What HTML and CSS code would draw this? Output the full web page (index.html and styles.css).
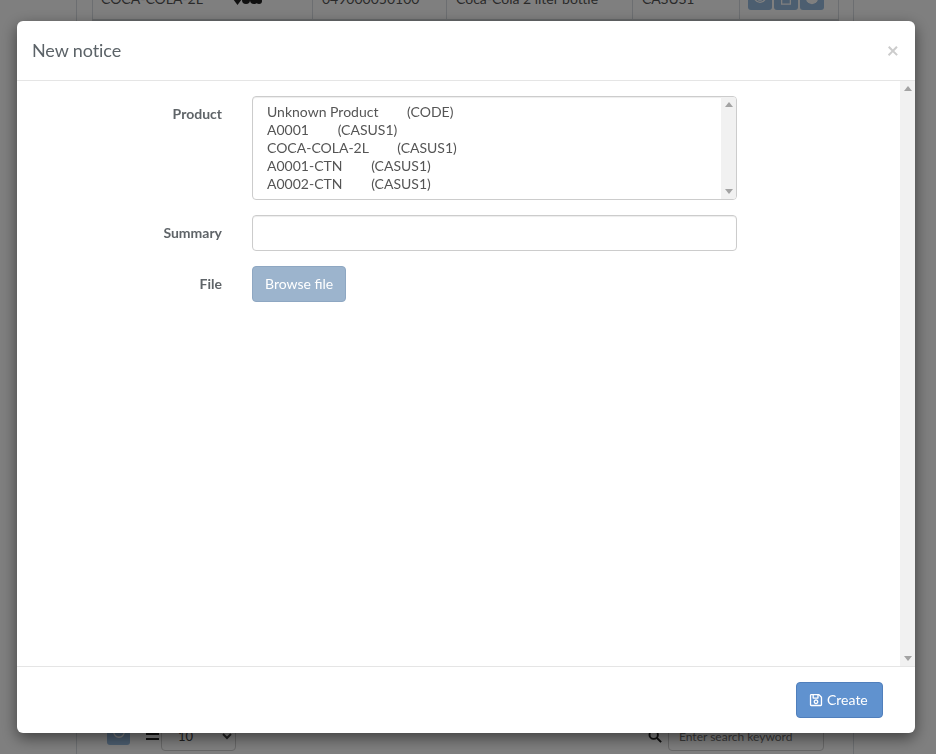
FILE: index.html
```html
<!DOCTYPE html>
<html lang="en">
<head>
<meta charset="utf-8">
<title>New notice</title>
<link rel="stylesheet" href="styles.css">
</head>
<body>
<div class="page">
  <div class="card">
    <table class="grid">
      <tr>
        <td class="c-code">COCA-COLA-2L</td>
        <td class="c-img">
          <svg class="shapes" viewBox="0 0 30 16" width="30" height="16"><path d="M4.5 5l4.5 5-4.5 6L0 10z"/><circle cx="13" cy="11" r="4"/><circle cx="21" cy="11" r="4"/><circle cx="17" cy="8" r="3.5"/><circle cx="26" cy="12" r="3"/></svg>
        </td>
        <td class="c-bar">049000050100</td>
        <td class="c-desc">Coca-Cola 2 liter bottle</td>
        <td class="c-own">CASUS1</td>
        <td class="c-act">
          <div class="acts">
            <span class="act"><svg viewBox="0 0 16 16" width="14" height="14"><path class="ln" d="M1 8s3-5 7-5 7 5 7 5-3 5-7 5-7-5-7-5z"/><circle class="ln" cx="8" cy="8" r="2.5"/></svg></span>
            <span class="act"><svg viewBox="0 0 16 16" width="14" height="14"><path class="ln" d="M3 1h10v14H3z"/></svg></span>
            <span class="act"><svg viewBox="0 0 16 16" width="14" height="14"><circle class="fl" cx="8" cy="8" r="7"/></svg></span>
          </div>
        </td>
      </tr>
    </table>
    <div class="tools">
      <span class="refresh"><svg viewBox="0 0 16 16" width="14" height="14"><path class="ln" d="M2 8a6 6 0 0 0 12 0"/></svg></span>
      <span class="bars"></span>
      <select class="pager"><option>10</option></select>
      <span class="spacer"></span>
      <svg class="lens" viewBox="0 0 16 16" width="14" height="14"><circle cx="6.5" cy="6.5" r="4.8"/><path d="M10 10l5 5"/></svg>
      <input class="search" type="text" placeholder="Enter search keyword">
    </div>
  </div>
</div>

<div class="overlay"></div>

<div class="modal">
  <div class="modal-head">
    <h4 class="modal-title">New notice</h4>
    <span class="close">×</span>
  </div>
  <div class="modal-middle">
    <div class="modal-body">
      <div class="row">
        <label class="lbl">Product</label>
        <div class="list-wrap">
          <select class="list" multiple size="5">
            <option>Unknown Product&nbsp;&nbsp;&nbsp;&nbsp;&nbsp;&nbsp;&nbsp;&nbsp;(CODE)</option>
            <option>A0001&nbsp;&nbsp;&nbsp;&nbsp;&nbsp;&nbsp;&nbsp;&nbsp;(CASUS1)</option>
            <option>COCA-COLA-2L&nbsp;&nbsp;&nbsp;&nbsp;&nbsp;&nbsp;&nbsp;&nbsp;(CASUS1)</option>
            <option>A0001-CTN&nbsp;&nbsp;&nbsp;&nbsp;&nbsp;&nbsp;&nbsp;&nbsp;(CASUS1)</option>
            <option>A0002-CTN&nbsp;&nbsp;&nbsp;&nbsp;&nbsp;&nbsp;&nbsp;&nbsp;(CASUS1)</option>
          </select>
          <div class="vbar vbar-list"><span class="arrow arrow-up"></span><span class="arrow arrow-down"></span></div>
        </div>
      </div>
      <div class="row row-mid">
        <label class="lbl">Summary</label>
        <input class="field" type="text">
      </div>
      <div class="row row-mid">
        <label class="lbl">File</label>
        <button class="btn btn-browse" type="button">Browse file</button>
      </div>
    </div>
    <div class="vbar"><span class="arrow arrow-up"></span><span class="arrow arrow-down"></span></div>
  </div>
  <div class="modal-foot">
    <button class="btn btn-create" type="button">
      <svg class="save" viewBox="0 0 448 512" width="14" height="14"><path d="M433.941 129.941l-83.882-83.882A48 48 0 0 0 316.118 32H48C21.49 32 0 53.49 0 80v352c0 26.51 21.49 48 48 48h352c26.51 0 48-21.49 48-48V163.882a48 48 0 0 0-14.059-33.941zM272 80v80H144V80h128zm122 352H54a6 6 0 0 1-6-6V86a6 6 0 0 1 6-6h42v104c0 13.255 10.745 24 24 24h176c13.255 0 24-10.745 24-24V83.882l78.243 78.243a6 6 0 0 1 1.757 4.243V426a6 6 0 0 1-6 6zM224 232c-48.523 0-88 39.477-88 88s39.477 88 88 88 88-39.477 88-88-39.477-88-88-88zm0 128c-22.056 0-40-17.944-40-40s17.944-40 40-40 40 17.944 40 40-17.944 40-40 40z"/></svg>
      Create
    </button>
  </div>
</div>
</body>
</html>
```

FILE: styles.css
```css
* { box-sizing: border-box; }
html, body { margin: 0; height: 100%; overflow: hidden; }
body {
  font-family: Lato, "Open Sans", sans-serif;
  font-size: 14px;
  color: #555;
  background: #fff;
}

/* Page behind the dialog */
.page { height: 754px; padding: 0 82px 0 76px; }
.card {
  height: 100%;
  border-left: 1px solid #d8dde2;
  border-right: 1px solid #d8dde2;
  padding: 0 15px;
  display: flex;
  flex-direction: column;
  justify-content: space-between;
  overflow: hidden;
}
.grid {
  border-collapse: collapse;
  table-layout: fixed;
  width: 746px;
  margin-top: -20px;
  color: #555;
}
.grid td {
  border: 1px solid #d8dde2;
  border-top: 0;
  border-bottom: 2px solid #d0d4d8;
  height: 40px;
  padding: 0 9px 10px;
  vertical-align: bottom;
  line-height: 20px;
  white-space: nowrap;
}
.grid td.c-code { width: 132px; padding-left: 8px; border-right: 0; }
.grid td.c-img { width: 88px; padding: 0 0 15px 8px; border-left: 0; }
.grid td.c-bar { width: 134px; }
.grid td.c-desc { width: 186px; }
.grid td.c-own { width: 107px; }
.grid td.c-act { width: 99px; padding: 0 8px 9px; }
.shapes { display: block; fill: #222; margin-bottom: -1px; }
.acts { display: flex; gap: 2px; }
.act {
  width: 24px;
  height: 24px;
  background: #98bce0;
  border-radius: 3px;
  display: flex;
  align-items: center;
  justify-content: center;
}
.ln { fill: none; stroke: #fff; stroke-width: 1.5; }
.fl { fill: #fff; }
.tools {
  display: flex;
  align-items: center;
  height: 30px;
  margin-bottom: 3px;
  padding-left: 15px;
  width: 732px;
}
.refresh {
  width: 23px;
  height: 24px;
  margin-top: -6px;
  background: #98bce0;
  border-radius: 3px;
  display: flex;
  align-items: flex-start;
  justify-content: center;
  padding-top: 4px;
}
.bars {
  width: 13px;
  height: 7px;
  margin-left: 16px;
  border-top: 2px solid #222;
  border-bottom: 2px solid #222;
}
.pager {
  width: 75px;
  height: 30px;
  margin-left: 2px;
  padding: 0 12px;
  font: inherit;
  font-size: 13px;
  color: #444;
  background: #fff;
  border: 1px solid #d0d0d0;
  border-radius: 4px;
}
.spacer { flex: 1; }
.lens { fill: none; stroke: #222; stroke-width: 2.2; margin-right: 6px; }
.search {
  width: 156px;
  height: 30px;
  padding: 0 10px;
  font: inherit;
  font-size: 12px;
  border: 1px solid #d0d0d0;
  border-radius: 4px;
}

/* Dim layer */
.overlay { position: fixed; inset: 0; background: rgba(0, 0, 0, .5); }

/* Dialog */
.modal {
  position: fixed;
  left: 17px;
  top: 21px;
  width: 898px;
  height: 712px;
  background: #fff;
  border-radius: 6px;
  box-shadow: 0 5px 15px rgba(0, 0, 0, .5);
  display: flex;
  flex-direction: column;
  overflow: hidden;
}
.modal-head {
  height: 60px;
  flex: none;
  padding: 0 16px 2px 15px;
  border-bottom: 1px solid #e5e5e5;
  display: flex;
  align-items: center;
  justify-content: space-between;
}
.modal-title {
  margin: 0;
  font-size: 18px;
  font-weight: 400;
  line-height: 20px;
  letter-spacing: -.1px;
  color: #5c6368;
}
.close {
  font-size: 21px;
  font-weight: 700;
  line-height: 1;
  color: #ccc;
}
.modal-middle { flex: 1; min-height: 0; display: flex; }
.modal-body {
  flex: 1;
  padding: 15px 0 0 15px;
  display: flex;
  flex-direction: column;
  gap: 15px;
}

/* Drawn scrollbars */
.vbar {
  width: 15px;
  flex: none;
  background: #f1f1f1;
  display: flex;
  flex-direction: column;
  justify-content: space-between;
  align-items: center;
  padding: 5px 0;
}
.vbar-list {
  position: absolute;
  right: 1px;
  top: 1px;
  bottom: 1px;
  border-radius: 0 3px 3px 0;
}
.arrow { width: 0; height: 0; border-left: 4px solid transparent; border-right: 4px solid transparent; }
.arrow-up { border-bottom: 5px solid #a3a3a3; }
.arrow-down { border-top: 5px solid #a3a3a3; }

.row { display: flex; gap: 30px; align-items: flex-start; }
.row-mid { align-items: center; }
.lbl {
  width: 190px;
  flex: none;
  text-align: right;
  font-weight: 700;
  color: #5f6468;
}
.row-mid .lbl { padding-bottom: 2px; }
.row:first-child .lbl { padding-top: 9px; }
.list-wrap { position: relative; width: 485px; height: 104px; }
.list, .field {
  width: 485px;
  font: inherit;
  color: #555;
  border: 1px solid #ccc;
  border-radius: 4px;
  background: #fff;
  box-shadow: inset 0 1px 1px rgba(0, 0, 0, .075);
}
.list { display: block; height: 104px; padding: 6px 12px; outline: none; overflow: hidden; }
.field { height: 36px; padding: 6px 12px; }
.btn {
  height: 36px;
  padding: 0 12px 1px;
  font: inherit;
  line-height: 20px;
  color: #fff;
  border-radius: 4px;
  display: inline-flex;
  align-items: center;
}
.btn-browse { background: #9cb4cd; border: 1px solid #8ea7c2; }
.btn-create { width: 87px; background: #6092cf; border: 1px solid #507fbc; gap: 4px; }
.save { fill: #fff; flex: none; }
.modal-foot {
  height: 67px;
  flex: none;
  border-top: 1px solid #e5e5e5;
  padding: 15px 32px 15px 15px;
  display: flex;
  justify-content: flex-end;
}
```
